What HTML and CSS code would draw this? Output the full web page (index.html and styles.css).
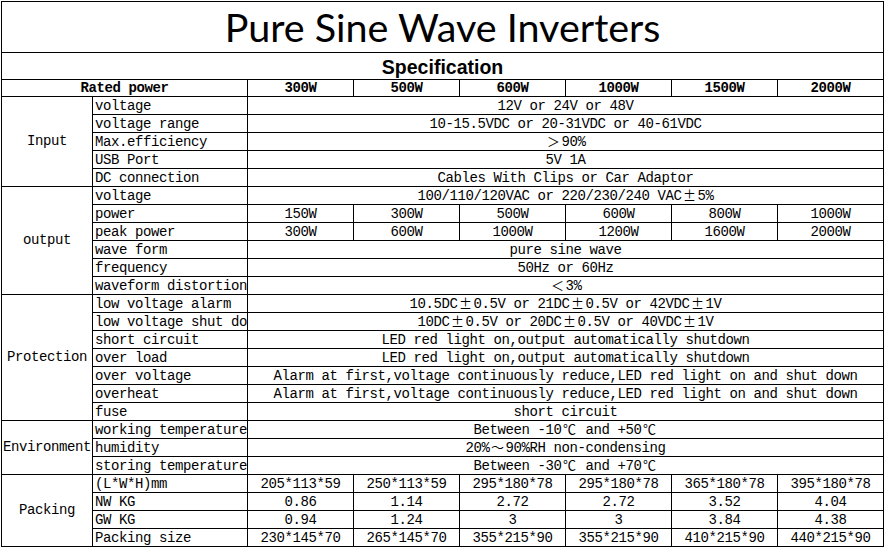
FILE: index.html
```html
<!DOCTYPE html>
<html>
<head>
<meta charset="utf-8">
<link rel="stylesheet" href="styles.css">
</head>
<body>
<table class="spec">
<colgroup>
<col class="c-group"><col class="c-label">
<col class="c-val"><col class="c-val"><col class="c-val"><col class="c-val"><col class="c-val"><col class="c-val">
</colgroup>
<tr class="r-title"><td colspan="8" class="title">Pure Sine Wave Inverters</td></tr>
<tr class="r-sub"><td colspan="8" class="subtitle">Specification</td></tr>
<tr class="r-head">
<td colspan="2" class="head">Rated power</td>
<td class="head">300W</td><td class="head">500W</td><td class="head">600W</td><td class="head">1000W</td><td class="head">1500W</td><td class="head">2000W</td>
</tr>

<tr><td rowspan="5" class="group">Input</td><td class="label">voltage</td><td colspan="6" class="val">12V or 24V or 48V</td></tr>
<tr><td class="label">voltage range</td><td colspan="6" class="val">10-15.5VDC or 20-31VDC or 40-61VDC</td></tr>
<tr><td class="label">Max.efficiency</td><td colspan="6" class="val"><span class="fw">＞</span>90%</td></tr>
<tr><td class="label">USB Port</td><td colspan="6" class="val">5V 1A</td></tr>
<tr><td class="label">DC connection</td><td colspan="6" class="val">Cables With Clips or Car Adaptor</td></tr>

<tr><td rowspan="6" class="group">output</td><td class="label">voltage</td><td colspan="6" class="val">100/110/120VAC or 220/230/240 VAC<span class="fw">±</span>5%</td></tr>
<tr><td class="label">power</td><td class="val">150W</td><td class="val">300W</td><td class="val">500W</td><td class="val">600W</td><td class="val">800W</td><td class="val">1000W</td></tr>
<tr><td class="label">peak power</td><td class="val">300W</td><td class="val">600W</td><td class="val">1000W</td><td class="val">1200W</td><td class="val">1600W</td><td class="val">2000W</td></tr>
<tr><td class="label">wave form</td><td colspan="6" class="val">pure sine wave</td></tr>
<tr><td class="label">frequency</td><td colspan="6" class="val">50Hz or 60Hz</td></tr>
<tr><td class="label">waveform distortion</td><td colspan="6" class="val"><span class="fw">＜</span>3%</td></tr>

<tr><td rowspan="7" class="group">Protection</td><td class="label">low voltage alarm</td><td colspan="6" class="val">10.5DC<span class="fw">±</span>0.5V or 21DC<span class="fw">±</span>0.5V or 42VDC<span class="fw">±</span>1V</td></tr>
<tr><td class="label">low voltage shut do</td><td colspan="6" class="val">10DC<span class="fw">±</span>0.5V or 20DC<span class="fw">±</span>0.5V or 40VDC<span class="fw">±</span>1V</td></tr>
<tr><td class="label">short circuit</td><td colspan="6" class="val">LED red light on,output automatically shutdown</td></tr>
<tr><td class="label">over load</td><td colspan="6" class="val">LED red light on,output automatically shutdown</td></tr>
<tr><td class="label">over voltage</td><td colspan="6" class="val">Alarm at first,voltage continuously reduce,LED red light on and shut down</td></tr>
<tr><td class="label">overheat</td><td colspan="6" class="val">Alarm at first,voltage continuously reduce,LED red light on and shut down</td></tr>
<tr><td class="label">fuse</td><td colspan="6" class="val">short circuit</td></tr>

<tr><td rowspan="3" class="group">Environment</td><td class="label">working temperature</td><td colspan="6" class="val">Between -10<span class="fw">℃</span> and +50<span class="fw">℃</span></td></tr>
<tr><td class="label">humidity</td><td colspan="6" class="val">20%<span class="fw">～</span>90%RH non-condensing</td></tr>
<tr><td class="label">storing temperature</td><td colspan="6" class="val">Between -30<span class="fw">℃</span> and +70<span class="fw">℃</span></td></tr>

<tr><td rowspan="4" class="group">Packing</td><td class="label">(L*W*H)mm</td><td class="val">205*113*59</td><td class="val">250*113*59</td><td class="val">295*180*78</td><td class="val">295*180*78</td><td class="val">365*180*78</td><td class="val">395*180*78</td></tr>
<tr><td class="label">NW KG</td><td class="val">0.86</td><td class="val">1.14</td><td class="val">2.72</td><td class="val">2.72</td><td class="val">3.52</td><td class="val">4.04</td></tr>
<tr><td class="label">GW KG</td><td class="val">0.94</td><td class="val">1.24</td><td class="val">3</td><td class="val">3</td><td class="val">3.84</td><td class="val">4.38</td></tr>
<tr><td class="label">Packing size</td><td class="val">230*145*70</td><td class="val">265*145*70</td><td class="val">355*215*90</td><td class="val">355*215*90</td><td class="val">410*215*90</td><td class="val">440*215*90</td></tr>
</table>
</body>
</html>
```
FILE: styles.css
```css
html, body {
  margin: 0;
  padding: 0;
  background: #ffffff;
}
body {
  padding: 1px 0 0 1px;
}
.spec {
  border-collapse: collapse;
  table-layout: fixed;
  width: 883px;
  font-family: "Liberation Mono", "DejaVu Sans Mono", monospace;
  font-size: 14px;
  letter-spacing: -0.4px;
  color: #000;
}
.c-group { width: 91px; }
.c-label { width: 155px; }
.c-val { width: 106px; }
.spec td {
  border: 1px solid #000;
  padding: 0;
  height: 17px;
  line-height: 15px;
  vertical-align: bottom;
  white-space: nowrap;
}
.spec tr.r-title td {
  height: 50px;
}
.spec td.title {
  font-family: Lato, "Open Sans", sans-serif;
  font-size: 39.5px;
  letter-spacing: 0;
  line-height: 48px;
  text-align: center;
  vertical-align: middle;
}
.spec tr.r-sub td {
  height: 26px;
}
.spec td.subtitle {
  font-family: "Liberation Sans", Arial, sans-serif;
  font-weight: bold;
  font-size: 19.5px;
  letter-spacing: 0;
  line-height: 24px;
  text-align: center;
  vertical-align: bottom;
}
.spec td.head {
  font-weight: bold;
  text-align: center;
  height: 16px;
}
.spec td.group {
  text-align: center;
  vertical-align: middle;
}
.spec td.label {
  text-align: left;
  padding-left: 2px;
  overflow: hidden;
}
.spec td.val {
  text-align: center;
}
.fw {
  font-family: "Noto Sans CJK SC", sans-serif;
  font-size: 13px;
  line-height: 13px;
  letter-spacing: 0;
  display: inline-block;
  width: 16px;
  text-align: center;
}
```
